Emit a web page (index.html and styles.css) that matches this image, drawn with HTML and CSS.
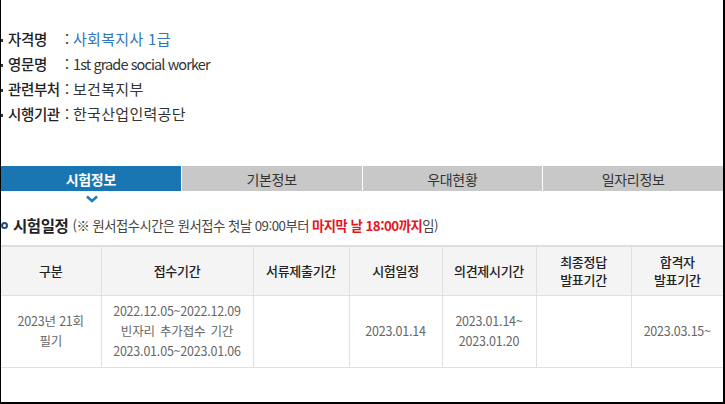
FILE: index.html
```html
<!DOCTYPE html>
<html lang="ko">
<head>
<meta charset="utf-8">
<link rel="stylesheet" href="styles.css">
</head>
<body>
<div class="frame">
  <ul class="info">
    <li><span class="label">자격명</span><span class="colon">:</span><span class="value blue">사회복지사 1급</span></li>
    <li><span class="label">영문명</span><span class="colon">:</span><span class="value latin">1st grade social worker</span></li>
    <li><span class="label">관련부처</span><span class="colon">:</span><span class="value">보건복지부</span></li>
    <li><span class="label">시행기관</span><span class="colon">:</span><span class="value">한국산업인력공단</span></li>
  </ul>

  <div class="tabs">
    <div class="tab active">시험정보</div>
    <div class="tab">기본정보</div>
    <div class="tab">우대현황</div>
    <div class="tab">일자리정보</div>
  </div>
  <div class="chev-row">
    <svg class="chev" width="12" height="8" viewBox="0 0 12 8"><path d="M1 1.5 L6 6 L11 1.5" fill="none" stroke="#1e7bbf" stroke-width="2.6"/></svg>
  </div>

  <div class="heading">
    <span class="ring"></span>
    <span class="h-title">시험일정</span>
    <span class="h-note">(※ 원서접수시간은 원서접수 첫날 09:00부터 <b class="red">마지막 날 18:00까지</b>임)</span>
  </div>

  <table class="sched">
    <colgroup>
      <col class="c1"><col class="c2"><col class="c3"><col class="c4"><col class="c5"><col class="c6"><col class="c7">
    </colgroup>
    <thead>
      <tr>
        <th>구분</th>
        <th>접수기간</th>
        <th>서류제출기간</th>
        <th>시험일정</th>
        <th>의견제시기간</th>
        <th class="two">최종정답<br>발표기간</th>
        <th class="two">합격자<br>발표기간</th>
      </tr>
    </thead>
    <tbody>
      <tr>
        <td>2023년 21회<br>필기</td>
        <td>2022.12.05~2022.12.09<br><span class="kr">빈자리 추가접수 기간</span><br>2023.01.05~2023.01.06</td>
        <td></td>
        <td>2023.01.14</td>
        <td>2023.01.14~<br>2023.01.20</td>
        <td></td>
        <td>2023.03.15~</td>
      </tr>
    </tbody>
  </table>
</div>
</body>
</html>
```

FILE: styles.css
```css
html, body {
  margin: 0;
  padding: 0;
  background: #fff;
}
body {
  font-family: "Noto Sans CJK KR", "Noto Sans", sans-serif;
  color: #333;
}
.frame {
  box-sizing: border-box;
  width: 725px;
  height: 404px;
  border-left: 1px solid #000;
  border-right: 2px solid #000;
  border-bottom: 2px solid #000;
  overflow: hidden;
}
.info {
  list-style: none;
  margin: 0;
  padding: 26px 0 0 0;
}
.info li {
  display: flex;
  align-items: center;
  height: 25px;
  font-size: 14.5px;
  letter-spacing: -0.4px;
  position: relative;
}
.info li::before {
  content: "";
  position: absolute;
  left: -1px;
  top: 13px;
  width: 3px;
  height: 3px;
  background: #333;
}
.label {
  width: 57px;
  margin-left: 7px;
  color: #222;
  font-weight: 500;
}
.colon {
  width: 8px;
  color: #333;
}
.value {
  color: #333;
  font-size: 15px;
  letter-spacing: 0.3px;
}
.value.latin {
  font-size: 14.5px;
  letter-spacing: -0.9px;
}
.value.blue {
  color: #2f76b9;
}
.tabs {
  display: flex;
  margin-top: 40px;
  height: 25px;
  gap: 1px;
}
.tab {
  flex: 1;
  background: #c8c8c8;
  color: #333;
  font-size: 14px;
  display: flex;
  align-items: center;
  justify-content: center;
  letter-spacing: -0.3px;
}
.tab.active {
  background: #1a76b3;
  color: #fff;
  font-weight: 700;
}
.chev-row {
  width: 181px;
  display: flex;
  justify-content: center;
  height: 16px;
  align-items: center;
}
.heading {
  display: flex;
  align-items: center;
  height: 22px;
  margin-top: 7px;
}
.ring {
  box-sizing: border-box;
  width: 7px;
  height: 7px;
  border: 2px solid #1b4f86;
  border-radius: 50%;
  margin-left: 0;
  margin-right: 5px;
}
.h-title {
  font-size: 15.5px;
  font-weight: 700;
  color: #222;
  letter-spacing: -0.4px;
  margin-right: 4px;
}
.h-note {
  font-size: 13.3px;
  color: #444;
  letter-spacing: -0.5px;
}
.red {
  color: #e2161e;
  font-weight: 700;
}
.sched {
  margin-top: 9px;
  width: 722px;
  border-collapse: collapse;
  table-layout: fixed;
  font-size: 12.5px;
}
.c1 { width: 100px; }
.c2 { width: 152px; }
.c3 { width: 96px; }
.c4 { width: 93px; }
.c5 { width: 94px; }
.c6 { width: 95px; }
.c7 { width: 92px; }
.sched th, .sched td {
  border: 1px solid #e0e0e0;
  text-align: center;
  vertical-align: middle;
  padding: 0;
}
.sched tr > :first-child { border-left: none; }
.sched tr > :last-child { border-right: none; }
.sched thead tr {
  height: 49px;
  border-top: 2px solid #dedede;
}
.sched th {
  background: #f4f4f4;
  color: #222;
  font-weight: 500;
  font-size: 13px;
  line-height: 17px;
  letter-spacing: -0.3px;
}
.sched th.two {
  line-height: 18px;
}
.sched tbody tr {
  height: 72px;
}
.sched td {
  color: #666;
  line-height: 20px;
  letter-spacing: -0.2px;
}
.sched td .kr {
  word-spacing: 2px;
}
```
